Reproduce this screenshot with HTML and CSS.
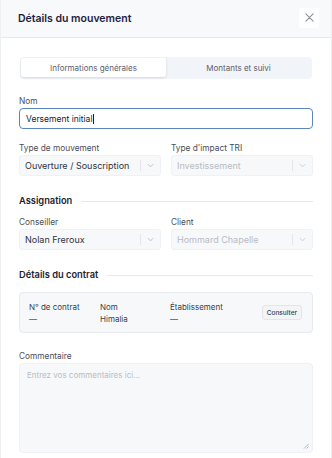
FILE: index.html
```html
<!DOCTYPE html>
<html lang="fr">
<head>
<meta charset="utf-8">
<link rel="stylesheet" href="styles.css">
</head>
<body>
<div class="modal">
  <div class="header">
    <h1 class="title">Détails du mouvement</h1>
    <button class="close" aria-label="Fermer">
      <svg width="9" height="9" viewBox="0 0 10 10"><path d="M1 1L9 9M9 1L1 9" stroke="#8a8f99" stroke-width="1.2" stroke-linecap="round"/></svg>
    </button>
  </div>
  <div class="body">
    <div class="tabs">
      <div class="tab active">Informations générales</div>
      <div class="tab">Montants et suivi</div>
    </div>

    <div class="field first">
      <label class="label">Nom</label>
      <div class="input focused">Versement initial<span class="caret"></span></div>
    </div>

    <div class="row">
      <div class="field">
        <label class="label">Type de mouvement</label>
        <div class="select"><span class="val">Ouverture / Souscription</span><span class="sep"></span><svg class="chev" width="7" height="5" viewBox="0 0 8 5"><path d="M1 1l3 3 3-3" fill="none" stroke="#b5b9c0" stroke-width="1"/></svg></div>
      </div>
      <div class="field">
        <label class="label">Type d'impact TRI</label>
        <div class="select disabled"><span class="val">Investissement</span><span class="sep"></span><svg class="chev" width="7" height="5" viewBox="0 0 8 5"><path d="M1 1l3 3 3-3" fill="none" stroke="#c5c8ce" stroke-width="1"/></svg></div>
      </div>
    </div>

    <div class="section"><span>Assignation</span><span class="line"></span></div>

    <div class="row tight">
      <div class="field">
        <label class="label">Conseiller</label>
        <div class="select"><span class="val">Nolan Freroux</span><span class="sep"></span><svg class="chev" width="7" height="5" viewBox="0 0 8 5"><path d="M1 1l3 3 3-3" fill="none" stroke="#b5b9c0" stroke-width="1"/></svg></div>
      </div>
      <div class="field">
        <label class="label">Client</label>
        <div class="select disabled"><span class="val">Hommard Chapelle</span><span class="sep"></span><svg class="chev" width="7" height="5" viewBox="0 0 8 5"><path d="M1 1l3 3 3-3" fill="none" stroke="#c5c8ce" stroke-width="1"/></svg></div>
      </div>
    </div>

    <div class="section"><span>Détails du contrat</span><span class="line"></span></div>

    <div class="card">
      <div class="col c1"><div class="k">N° de contrat</div><div class="v">—</div></div>
      <div class="col c2"><div class="k">Nom</div><div class="v">Himalia</div></div>
      <div class="col c3"><div class="k">Établissement</div><div class="v">—</div></div>
      <button class="btn">Consulter</button>
    </div>

    <div class="field comment">
      <label class="label">Commentaire</label>
      <div class="textarea"><span class="ph">Entrez vos commentaires ici...</span>
        <svg class="grip" width="6" height="6" viewBox="0 0 6 6"><path d="M5.5 1L1 5.5M5.5 3.5L3.5 5.5" stroke="#a0a4ab" stroke-width="0.8"/></svg>
      </div>
    </div>
  </div>
</div>
</body>
</html>
```
FILE: styles.css
```css
* { box-sizing: border-box; }
html, body { margin: 0; padding: 0; background: #ffffff; }
body {
  font-family: Inter, "Noto Sans", sans-serif;
  color: #2a2d3a;
  width: 332px;
  height: 458px;
  overflow: hidden;
}
.modal {
  width: 332px;
  height: 458px;
  border-left: 1px solid #eef0f3;
  border-right: 1px solid #eceef2;
  background: #fff;
}
.header {
  height: 38px;
  background: #f8f9fb;
  border-bottom: 1px solid #e6e8ec;
  display: flex;
  align-items: center;
  justify-content: space-between;
  padding: 0 11px 0 17px;
}
.title {
  margin: 0;
  font-size: 10.5px;
  font-weight: 600;
  color: #1d2140;
  letter-spacing: 0;
}
.close {
  width: 20px;
  height: 20px;
  border: none;
  background: #ffffff;
  border-radius: 3px;
  display: flex;
  align-items: center;
  justify-content: center;
  padding: 0;
  margin-top: -2px;
  margin-right: 1px;
}
.body { padding: 19px 18px 0 18px; }
.tabs {
  display: flex;
  background: #f1f4f8;
  border-radius: 4px;
  height: 22px;
  padding: 1px 1px 2px 1px;
  margin: 0 1px;
}
.tab {
  flex: 1;
  display: flex;
  align-items: center;
  justify-content: center;
  font-size: 8px;
  color: #5c6070;
  border-radius: 3px;
}
.tab.active {
  background: #fff;
  box-shadow: 0 1px 3px rgba(20, 30, 60, 0.12);
}
.field { display: flex; flex-direction: column; }
.field.first { margin-top: 17px; }
.label {
  font-size: 8.3px;
  line-height: 10px;
  color: #4a4d58;
  margin-bottom: 2px;
}
.input {
  height: 21px;
  border: 1.5px solid #5a86bd;
  border-radius: 4px;
  display: flex;
  align-items: center;
  padding-left: 6px;
  font-size: 8.5px;
  color: #1d2030;
  background: #fff;
}
.caret { display: inline-block; width: 1px; height: 10px; background: #222; margin-left: 0.5px; }
.row {
  display: grid;
  grid-template-columns: 1fr 1fr;
  gap: 10px;
  margin-top: 14px;
}
.row.tight { margin-top: 10px; }
.select {
  height: 21px;
  background: #f7f8fa;
  border: 1px solid #f0f1f4;
  border-radius: 3px;
  display: flex;
  align-items: center;
  padding-left: 5px;
  font-size: 9px;
  color: #30333d;
}
.select .val { flex: 1; white-space: nowrap; overflow: hidden; }
.select.disabled { color: #b8bbc2; }
.sep { width: 1px; height: 11px; background: #e3e5e9; }
.chev { margin: 0 6px 0 6px; }
.section {
  display: flex;
  align-items: center;
  gap: 9px;
  margin-top: 19px;
  font-size: 9.3px;
  font-weight: 600;
  color: #1f2233;
  line-height: 12px;
}
.section .line { flex: 1; height: 1px; background: #e6e8ec; }
.card {
  margin-top: 11px;
  height: 41px;
  background: #f7f8fa;
  border: 1px solid #e8eaee;
  border-radius: 4px;
  display: flex;
  align-items: center;
  padding: 0 9px;
  font-size: 8px;
  color: #3a3d48;
}
.col { display: flex; flex-direction: column; gap: 2px; line-height: 10px; }
.c1 { width: 71px; }
.c2 { width: 70px; }
.c3 { flex: 1; }
.btn {
  font-family: inherit;
  font-size: 6.5px;
  font-weight: 500;
  color: #3a3d48;
  background: #f3f4f6;
  border: 1px solid #e3e5ea;
  border-radius: 3px;
  height: 15px;
  padding: 0 4px;
  margin-right: 1px;
}
.comment { margin-top: 18px; }
.textarea {
  position: relative;
  height: 90px;
  background: #f7f8fa;
  border: 1px solid #f0f1f4;
  border-radius: 4px;
  padding: 6px 7px;
  font-size: 8px;
}
.ph { color: #b9bcc3; }
.grip { position: absolute; right: 3px; bottom: 3px; }
```
